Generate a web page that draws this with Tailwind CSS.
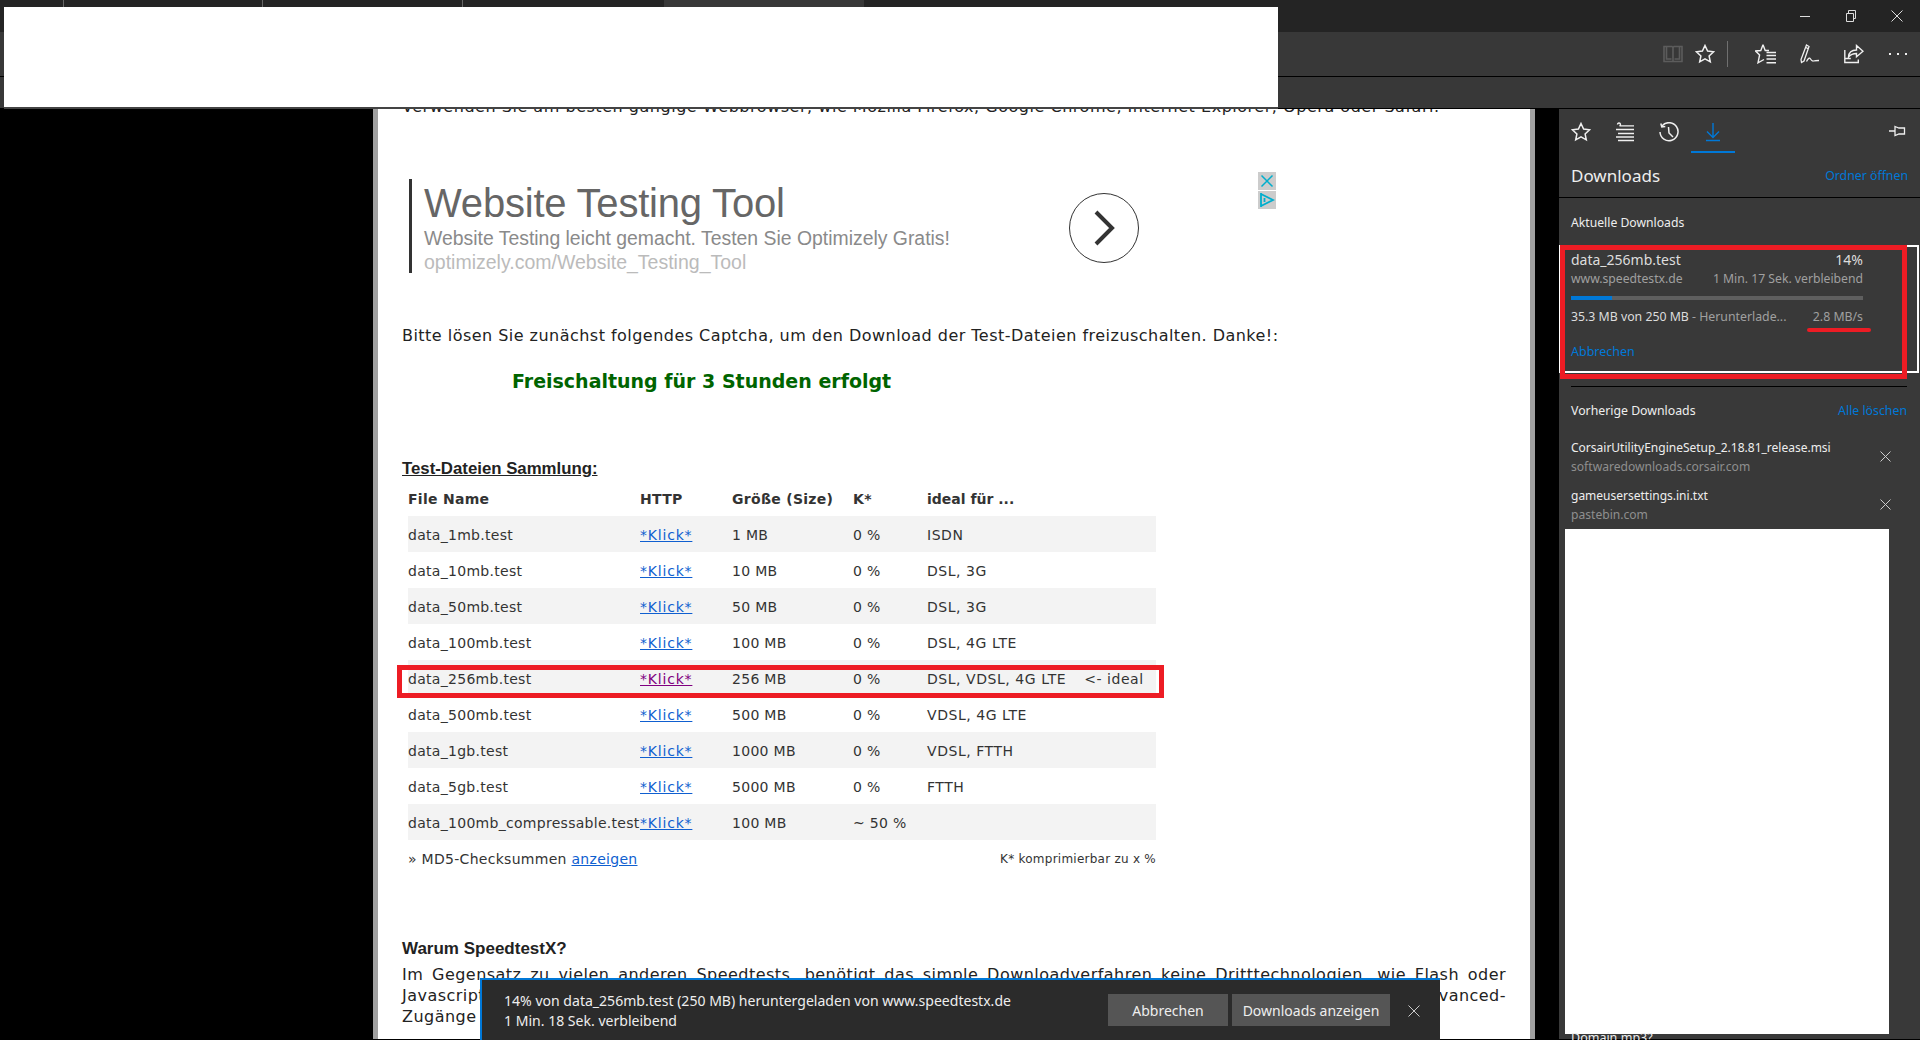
<!DOCTYPE html>
<html><head><meta charset="utf-8"><script src="https://cdn.jsdelivr.net/npm/@tailwindcss/browser@4"></script></head>
<body class="m-0 bg-black overflow-hidden">
<div class="relative w-[1920px] h-[1040px] overflow-hidden font-['DejaVu_Sans',sans-serif]">

<!-- title bar -->
<div class="h-[32px] bg-[#242424] flex text-[#ddd] relative">
  <div class="w-[64px] border-r border-[#666] h-[8px]"></div>
  <div class="w-[199px] border-r border-[#666] h-[8px]"></div>
  <div class="w-[200px] border-r border-[#666] h-[8px]"></div>
  <div class="w-[201px]"></div>
  <div class="w-[200px] bg-[#383838]"></div>
  <div class="ml-auto flex h-[32px]">
    <div class="w-[46px] flex items-center justify-center"><svg width="12" height="12" viewBox="0 0 12 12"><path d="M1 6.500h10" stroke="#ddd" fill="none"/></svg></div>
    <div class="w-[46px] flex items-center justify-center"><svg width="12" height="12" viewBox="0 0 12 12" fill="none" stroke="#ddd"><path d="M1.500 3.500h7v8h-7zM3.500 3.500v-3h7v8h-2"/></svg></div>
    <div class="w-[46px] flex items-center justify-center"><svg width="12" height="12" viewBox="0 0 12 12" fill="none" stroke="#ddd"><path d="M.5.5l11 11M11.500.5l-11 11"/></svg></div>
  </div>
</div>
<!-- toolbar -->
<div class="h-[45px] bg-[#383838] border-b border-black flex items-center justify-end pr-[12px]">
  <svg class="mr-[12px]" width="20" height="20" viewBox="0 0 20 20" fill="none" stroke="#5c5c5c" stroke-width="1.600"><path d="M1 2.500h8l1 1 1-1h8v15H1zM10 3.500v14M3.500 2.500v12.500h5M16.500 2.500v12.500h-5"/></svg>
  <svg class="mr-[12px]" width="20" height="20" viewBox="0 0 20 20" fill="none" stroke="#f0f0f0" stroke-width="1.500"><path d="M10 1.500l2.600 5.600 6 .7-4.500 4.100 1.200 6L10 14.900l-5.300 3 1.200-6L1.400 7.800l6-.7z"/></svg>
  <div class="w-px h-[26px] bg-[#707070] mr-[27px]"></div>
  <svg class="mr-[23px]" width="22" height="20" viewBox="0 0 22 20" fill="none" stroke="#f0f0f0" stroke-width="1.400"><path d="M8 .8L10.200 6.500H14M8 .8L5.800 6.500.6 7l4 4L3 18.800l6-3.300M11.500 8.500h9.500M11.500 11.500h9.500M11.500 15h9.500M11.500 18.800h9.500"/></svg>
  <svg class="mr-[24px]" width="20" height="20" viewBox="0 0 20 20" fill="none" stroke="#f0f0f0" stroke-width="1.300"><path d="M6.500 1l2.500 1.500-5 14.500-2.500 1.500-.5-3zM6 3.500l2 1.200M6.500 17.500q2.500-5 4-2.500t3 2 5.500-.5"/></svg>
  <svg class="mr-[24px]" width="20" height="20" viewBox="0 0 20 20" fill="none" stroke="#f0f0f0" stroke-width="1.400"><path d="M.8 6v12.500h13.500v-3M.8 14.500h6M4.500 13q.5-7 8-7V1.500l6.500 5.800-6.500 5.500V9.500q-5 0-8 3.500z"/></svg>
  <svg width="20" height="4" viewBox="0 0 20 4" fill="#f0f0f0"><rect x="1" y="1" width="2" height="2"/><rect x="9" y="1" width="2" height="2"/><rect x="17" y="1" width="2" height="2"/></svg>
</div>
<!-- favorites bar -->
<div class="h-[32px] bg-[#383838] border-b border-black"></div>

<!-- main -->
<div class="flex h-[930px]">
  <div class="w-[373px] bg-black"></div>
  <!-- page -->
  <div class="w-[1162px] bg-white border-l-[5px] border-r-[5px] border-[#a0a0a0] overflow-hidden pl-[24px] pr-[24px] text-[#222] text-[16px] tracking-[0.47px]">
    <div class="mt-[-12px] h-[20px] leading-[20px] whitespace-nowrap tracking-[0.53px]">Verwenden Sie am besten gängige Webbrowser, wie Mozilla Firefox, Google Chrome, Internet Explorer, Opera oder Safari.</div>

    <div class="mt-[62px] ml-[7px] flex h-[94px] w-[867px] font-['Liberation_Sans',sans-serif] tracking-normal">
      <div class="w-[3px] bg-[#333]"></div>
      <div class="ml-[12px] w-[645px] pt-[1px]">
        <div class="h-[46px] leading-[46px] text-[40px] text-[#666] tracking-[-0.2px] whitespace-nowrap">Website Testing Tool</div>
        <div class="h-[25px] leading-[25px] text-[19.400px] text-[#8a8a8a] whitespace-nowrap">Website Testing leicht gemacht. Testen Sie Optimizely Gratis!</div>
        <div class="h-[22px] leading-[22px] text-[19.500px] text-[#bbb] whitespace-nowrap">optimizely.com/Website_Testing_Tool</div>
      </div>
      <div class="mt-[14px] w-[70px] h-[70px] rounded-full border border-[#333] flex items-center justify-center">
        <svg width="24" height="36" viewBox="0 0 24 36" fill="none" stroke="#333" stroke-width="4"><path d="M4 2l16 16L4 34"/></svg>
      </div>
      <div class="ml-[119px] -mt-[7px] w-[18px] flex flex-col gap-[1px]">
        <div class="h-[18px] bg-[#ccc] flex items-center justify-center"><svg width="14" height="14" viewBox="0 0 14 14" fill="none" stroke="#00aecd" stroke-width="1.500"><path d="M1.500 1.500l11 11M12.500 1.500l-11 11"/></svg></div>
        <div class="h-[18px] bg-[#ccc] flex items-center justify-center"><svg width="16" height="16" viewBox="0 0 16 16" fill="none" stroke="#00aecd" stroke-width="1.800"><path d="M2 1v14M2 2l12 6-12 6M5.500 6v4"/></svg></div>
      </div>
    </div>

    <div class="mt-[53px] h-[20px] leading-[20px] whitespace-nowrap">Bitte lösen Sie zunächst folgendes Captcha, um den Download der Test-Dateien freizuschalten. Danke!:</div>
    <div class="mt-[23px] ml-[110px] h-[24px] leading-[24px] text-[19px] tracking-normal font-bold text-[#006400] whitespace-nowrap">Freischaltung für 3 Stunden erfolgt</div>

    <div class="mt-[66px] h-[20px] leading-[20px] text-[16.800px] tracking-normal font-['Liberation_Sans',sans-serif] font-bold underline whitespace-nowrap">Test-Dateien Sammlung:</div>

    <table class="mt-[1px] ml-[6px] w-[748px] table-fixed border-collapse text-[14px] tracking-[0.29px] text-[#333] [&_td]:pt-[3px] [&_th]:pt-[3px]">
      <colgroup><col class="w-[232px]"><col class="w-[92px]"><col class="w-[121px]"><col class="w-[74px]"><col></colgroup>
      <tbody>
        <tr class="h-[36px] font-bold text-left"><th>File Name</th><th>HTTP</th><th>Größe (Size)</th><th>K*</th><th class="tracking-[0px]">ideal für ...</th></tr>
        <tr class="h-[36px] bg-[#f3f3f3]"><td>data_1mb.test</td><td><a class="underline text-[#0f5fd0] tracking-[0.8px]">*Klick*</a></td><td>1 MB</td><td>0 %</td><td class="tracking-[0.55px]">ISDN</td></tr>
        <tr class="h-[36px]"><td>data_10mb.test</td><td><a class="underline text-[#0f5fd0] tracking-[0.8px]">*Klick*</a></td><td>10 MB</td><td>0 %</td><td class="tracking-[0.55px]">DSL, 3G</td></tr>
        <tr class="h-[36px] bg-[#f3f3f3]"><td>data_50mb.test</td><td><a class="underline text-[#0f5fd0] tracking-[0.8px]">*Klick*</a></td><td>50 MB</td><td>0 %</td><td class="tracking-[0.55px]">DSL, 3G</td></tr>
        <tr class="h-[36px]"><td>data_100mb.test</td><td><a class="underline text-[#0f5fd0] tracking-[0.8px]">*Klick*</a></td><td>100 MB</td><td>0 %</td><td class="tracking-[0.55px]">DSL, 4G LTE</td></tr>
        <tr class="h-[36px] bg-[#f3f3f3]"><td>data_256mb.test</td><td><a class="underline text-[#800080] tracking-[0.8px]">*Klick*</a></td><td>256 MB</td><td>0 %</td><td class="whitespace-nowrap tracking-[0.55px]">DSL, VDSL, 4G LTE<span class="ml-[18px]">&lt;- ideal</span></td></tr>
        <tr class="h-[36px]"><td>data_500mb.test</td><td><a class="underline text-[#0f5fd0] tracking-[0.8px]">*Klick*</a></td><td>500 MB</td><td>0 %</td><td class="tracking-[0.55px]">VDSL, 4G LTE</td></tr>
        <tr class="h-[36px] bg-[#f3f3f3]"><td>data_1gb.test</td><td><a class="underline text-[#0f5fd0] tracking-[0.8px]">*Klick*</a></td><td>1000 MB</td><td>0 %</td><td class="tracking-[0.55px]">VDSL, FTTH</td></tr>
        <tr class="h-[36px]"><td>data_5gb.test</td><td><a class="underline text-[#0f5fd0] tracking-[0.8px]">*Klick*</a></td><td>5000 MB</td><td>0 %</td><td class="tracking-[0.55px]">FTTH</td></tr>
        <tr class="h-[36px] bg-[#f3f3f3]"><td class="whitespace-nowrap">data_100mb_compressable.test</td><td><a class="underline text-[#0f5fd0] tracking-[0.8px]">*Klick*</a></td><td>100 MB</td><td>~ 50 %</td><td></td></tr>
      </tbody>
    </table>
    <div class="ml-[6px] w-[748px] h-[38px] flex justify-between items-center text-[#333]">
      <span class="text-[14px] tracking-[0.29px]">» MD5-Checksummen <a class="underline text-[#0f5fd0]">anzeigen</a></span>
      <span class="text-[12px] tracking-[0.25px]">K* komprimierbar zu x %</span>
    </div>

    <div class="mt-[61px] h-[20px] leading-[20px] text-[17px] tracking-normal font-['Liberation_Sans',sans-serif] font-bold whitespace-nowrap">Warum SpeedtestX?</div>
    <div class="mt-[5px] leading-[21px] w-[1104px]">
      <div class="[text-align-last:justify]">Im Gegensatz zu vielen anderen Speedtests, benötigt das simple Downloadverfahren keine Dritttechnologien, wie Flash oder</div>
      <div class="[text-align-last:justify]">Javascript und liefert so auch bei hohen Bandbreiten verlässliche Messwerte, auch über Advanced-</div>
      <div>Zugänge</div>
    </div>
  </div>
  <div class="w-[24px] bg-black"></div>
  <!-- panel -->
  <div class="w-[361px] bg-[#393939] font-['Noto_Sans',sans-serif] text-[#ddd] relative">
    <div class="h-[44px] pl-[12px] flex items-start relative">
      <div class="flex items-center h-[44px] pt-[1px]">
        <svg class="mr-[24px]" width="20" height="20" viewBox="0 0 20 20" fill="none" stroke="#f0f0f0" stroke-width="1.500"><path d="M10 1.500l2.600 5.600 6 .7-4.500 4.100 1.200 6L10 14.900l-5.300 3 1.200-6L1.400 7.800l6-.7z"/></svg>
        <svg class="mr-[24px]" width="20" height="20" viewBox="0 0 20 20" fill="none" stroke="#f0f0f0" stroke-width="1.400"><path d="M2.500 2.500a1.500 1.500 0 1 1 2 1.400H19M1 7.500h18M3 11.500h16M1 15h18M3 18.500h16"/></svg>
        <svg class="mr-[24px]" width="20" height="20" viewBox="0 0 20 20" fill="none" stroke="#f0f0f0" stroke-width="1.500"><path d="M3 4a9 9 0 1 1-2 6M1.800 1.500l1 3.500 3.500-.5M9.500 5l.5 6 4 4"/></svg>
        <svg width="20" height="20" viewBox="0 0 20 20" fill="none" stroke="#0078d7" stroke-width="1.400"><path d="M10 1v14M4 9.500l6 6 6-6M3 18.500h14"/></svg>
      </div>
      <div class="absolute left-[132px] top-[42px] w-[44px] h-[2px] bg-[#0078d7]"></div>
      <svg class="absolute left-[330px] top-[15px]" width="17" height="14" viewBox="0 0 17 14" fill="none" stroke="#f0f0f0" stroke-width="1.300"><path d="M0 7h6M6 2.500l4 1.500h5.500v6H10l-4 1.500z"/></svg>
    </div>
    <div class="h-[45px] border-b border-black px-[12px] pt-[2px] flex items-center justify-between">
      <span class="text-[17px] text-[#eee]">Downloads</span>
      <span class="text-[12.300px] text-[#0078d7] mt-[1px]">Ordner öffnen</span>
    </div>
    <div class="h-[46px] px-[12px] pt-[4px] flex items-center text-[12.200px] text-[#eee]">Aktuelle Downloads</div>
    <div class="px-[12px] w-[304px] box-content">
      <div class="flex justify-between items-center h-[20px] text-[14px] text-[#ddd] w-[292px] mt-[5px]"><span>data_256mb.test</span><span>14%</span></div>
      <div class="flex justify-between items-center h-[21px] text-[12.200px] text-[#a0a0a0] w-[292px]"><span>www.speedtestx.de</span><span>1 Min. 17 Sek. verbleibend</span></div>
      <div class="mt-[6px] h-[4px] w-[292px] bg-[#5f5f5f]"><div class="h-full w-[41px] bg-[#0078d7]"></div></div>
      <div class="mt-[7px] flex justify-between items-center h-[20px] text-[12.300px] w-[292px]"><span class="text-[#ddd]">35.3 MB von 250 MB<span class="text-[#a0a0a0]"> - Herunterlade...</span></span><span class="text-[#a0a0a0]">2.8 MB/s</span></div>
      <div class="mt-[15px] h-[20px] leading-[20px] text-[12.500px] text-[#0078d7]">Abbrechen</div>
    </div>
    <div class="mt-[24px] ml-[12px] w-[336px] h-px bg-black"></div>
    <div class="mt-[14px] ml-[12px] w-[336px] h-[20px] flex justify-between items-center text-[12.300px]"><span class="text-[#eee]">Vorherige Downloads</span><span class="text-[#0078d7]">Alle löschen</span></div>
    <div class="mt-[16px] ml-[12px] w-[320px] flex justify-between items-center h-[39px]">
      <div class="leading-[19px]"><div class="text-[12px] text-[#eee] whitespace-nowrap">CorsairUtilityEngineSetup_2.18.81_release.msi</div><div class="text-[12.100px] text-[#8f8f8f]">softwaredownloads.corsair.com</div></div>
      <svg width="11" height="11" viewBox="0 0 11 11" fill="none" stroke="#ccc"><path d="M.5.5l10 10M10.500.5l-10 10"/></svg>
    </div>
    <div class="mt-[9px] ml-[12px] w-[320px] flex justify-between items-center h-[39px]">
      <div class="leading-[19px]"><div class="text-[12px] text-[#eee]">gameusersettings.ini.txt</div><div class="text-[12.100px] text-[#8f8f8f]">pastebin.com</div></div>
      <svg width="11" height="11" viewBox="0 0 11 11" fill="none" stroke="#ccc"><path d="M.5.5l10 10M10.500.5l-10 10"/></svg>
    </div>
    <div class="mt-[5px] ml-[6px] w-[324px] h-[505px] bg-white"></div>
    <div class="ml-[12px] mt-[-4px] text-[12.500px] leading-[16px] text-[#eee]">Domain.mp3?</div>
  </div>
</div>

<!-- redaction block over the browser chrome -->
<div class="absolute left-[4px] top-[7px] w-[1274px] h-[102px] bg-white border-b-2 border-[#444]"></div>

<!-- annotations -->
<div class="absolute left-[1559px] top-[245px] w-[360px] h-[128px] border-2 border-white"></div>
<div class="absolute left-[1560px] top-[245px] w-[347px] h-[134px] border-[5px] border-[#ed1c24]"></div>
<div class="absolute left-[1807px] top-[328px] w-[64px] h-[4px] rounded-full bg-[#ed1c24]"></div>
<div class="absolute left-[397px] top-[665px] w-[767px] h-[33px] border-[5px] border-[#ed1c24]"></div>

<!-- download bar -->
<div class="absolute left-[480px] top-[978px] w-[960px] h-[62px] bg-[#2b2b2b] border-t-2 border-l-2 border-[#0078d7] font-['Noto_Sans',sans-serif] flex items-start text-[#eee]">
  <div class="ml-[22px] mt-[11px] text-[14.050px] leading-[20px] w-[604px]">
    <div class="whitespace-nowrap">14% von data_256mb.test (250 MB) heruntergeladen von www.speedtestx.de</div>
    <div>1 Min. 18 Sek. verbleibend</div>
  </div>
  <div class="mt-[14px] w-[120px] h-[32px] bg-[#555] flex items-center justify-center text-[14px]">Abbrechen</div>
  <div class="mt-[14px] ml-[4px] w-[158px] h-[32px] bg-[#555] flex items-center justify-center text-[14px] whitespace-nowrap">Downloads anzeigen</div>
  <svg class="mt-[25px] ml-[18px]" width="12" height="12" viewBox="0 0 12 12" fill="none" stroke="#ccc"><path d="M.5.5l11 11M11.500.5l-11 11"/></svg>
</div>
</div>
</body></html>
